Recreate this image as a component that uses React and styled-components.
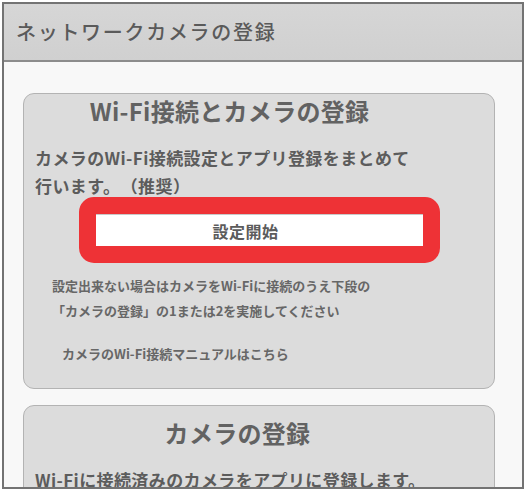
import React from 'react';
import styled, { createGlobalStyle } from 'styled-components';

const GlobalStyle = createGlobalStyle`
  html, body {
    margin: 0;
    padding: 0;
    background: #ffffff;
  }
  body {
    font-family: "Noto Sans CJK JP", "Noto Sans", sans-serif;
    color: #5e5e5e;
  }
`;

export default function App() {
  return (
    <>
      <GlobalStyle />
      <Frame>
        <Header>
          <HeaderTitle>ネットワークカメラの登録</HeaderTitle>
        </Header>
        <Content>
          <Card>
            <CardTitle $top={2} $right={60}>Wi-Fi接続とカメラの登録</CardTitle>
            <Lead>
              カメラのWi-Fi接続設定とアプリ登録をまとめて
              <br />
              行います。　（推奨）
            </Lead>
            <RedFrame>
              <StartButton>設定開始</StartButton>
            </RedFrame>
            <Note>
              設定出来ない場合はカメラをWi-Fiに接続のうえ下段の
              <br />
              「カメラの登録」の1または2を実施してください
            </Note>
            <ManualLink>カメラのWi-Fi接続マニュアルはこちら</ManualLink>
          </Card>
          <Card>
            <CardTitle $top={12} $right={44}>カメラの登録</CardTitle>
            <Lead>Wi-Fiに接続済みのカメラをアプリに登録します。</Lead>
          </Card>
        </Content>
      </Frame>
    </>
  );
}

const Frame = styled.div`
  box-sizing: border-box;
  margin: 2px 2px 0 2px;
  width: 522px;
  height: 487px;
  border: 2px solid #737373;
  background: #f8f8f8;
  overflow: hidden;
`;

const Header = styled.div`
  height: 56px;
  background: linear-gradient(#d6d6d6, #d0d0d0);
  border-bottom: 2px solid #8c8c8c;
  display: flex;
  align-items: center;
  padding-left: 12px;
`;

const HeaderTitle = styled.h1`
  margin: -2px 0 0;
  font-size: 20px;
  font-weight: 500;
  letter-spacing: 1.7px;
  color: #5a5a5a;
`;

const Content = styled.div`
  padding: 31px 27px 0 19px;
  display: flex;
  flex-direction: column;
  gap: 16px;
`;

const Card = styled.div`
  border: 1px solid #b3b3b3;
  border-radius: 11px;
  background: #dcdcdc;
  padding: 0 10px 22px 11px;
`;

const CardTitle = styled.h2`
  margin: 0;
  padding: ${(p) => p.$top}px ${(p) => p.$right}px 0 0;
  text-align: center;
  font-size: 24px;
  line-height: 30px;
  font-weight: 700;
  letter-spacing: 0.3px;
  color: #626262;
`;

const Lead = styled.p`
  margin: 18px 0 0;
  font-size: 17px;
  line-height: 28px;
  font-weight: 700;
  letter-spacing: 0.4px;
  color: #5c5c5c;
`;

const RedFrame = styled.div`
  box-sizing: border-box;
  margin: -3px 0 0 44px;
  width: 361px;
  border: 17px solid #ee3236;
  border-radius: 15px;
  background: #ee3236;
`;

const StartButton = styled.div`
  height: 32px;
  background: #ffffff;
  border-top: 1px solid #c8c8c8;
  box-sizing: border-box;
  display: flex;
  align-items: center;
  justify-content: center;
  padding-right: 28px;
  font-size: 16px;
  font-weight: 700;
  color: #5c5c5c;
  letter-spacing: 0.5px;
`;

const Note = styled.p`
  margin: 10px 0 0 17px;
  font-size: 13px;
  line-height: 25px;
  font-weight: 700;
  color: #676767;
`;

const ManualLink = styled.p`
  margin: 18px 0 0 27px;
  font-size: 13px;
  line-height: 25px;
  font-weight: 700;
  color: #676767;
`;
